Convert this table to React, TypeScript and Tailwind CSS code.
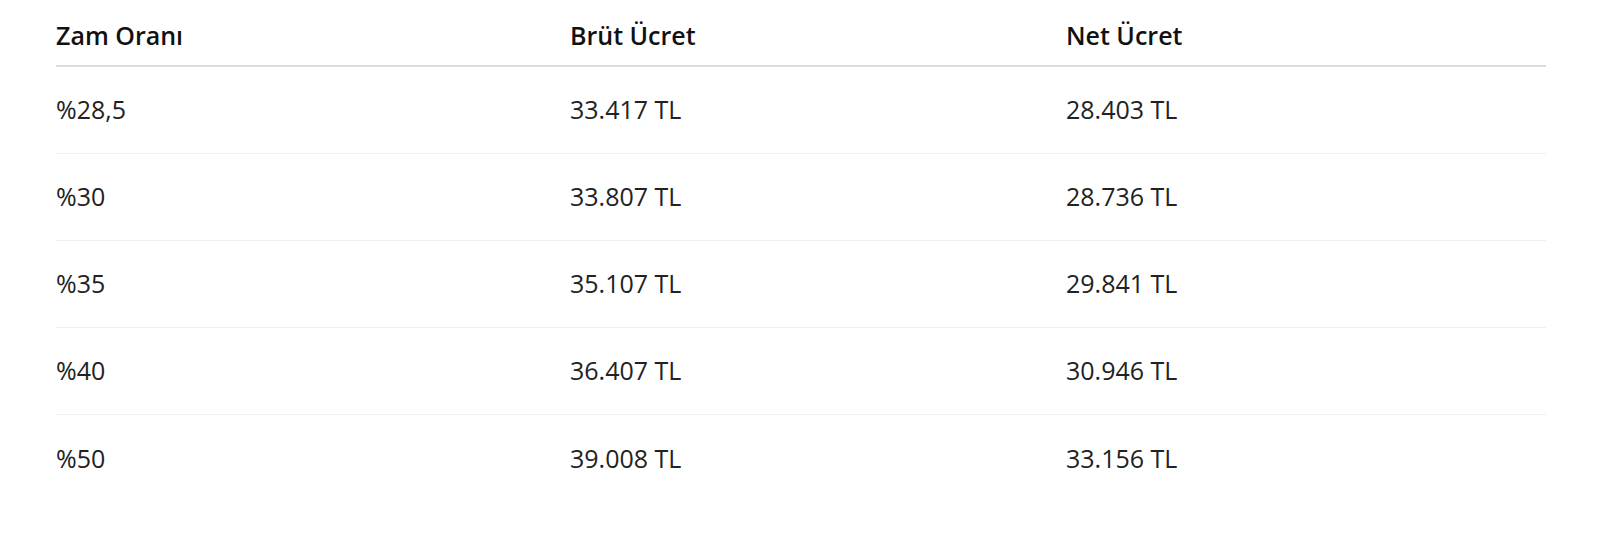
const rows = [
  { rate: "%28,5", gross: "33.417 TL", net: "28.403 TL" },
  { rate: "%30", gross: "33.807 TL", net: "28.736 TL" },
  { rate: "%35", gross: "35.107 TL", net: "29.841 TL" },
  { rate: "%40", gross: "36.407 TL", net: "30.946 TL" },
  { rate: "%50", gross: "39.008 TL", net: "33.156 TL" },
];

export default function App() {
  return (
    <main
      className="w-[1606px] h-[555px] bg-white pl-[56px] pr-[60px] text-[#222]"
      style={{ fontFamily: '"Open Sans", "Noto Sans", sans-serif' }}
    >
      <div className="grid grid-cols-[514px_496px_1fr] h-[67px] items-center pt-[6px] border-b-2 border-[#dcdcdc] text-[25px] font-semibold text-[#111]">
        <div>Zam Oranı</div>
        <div>Brüt Ücret</div>
        <div>Net Ücret</div>
      </div>
      {rows.map((r, i) => (
        <div
          key={r.rate}
          className={`grid grid-cols-[514px_496px_1fr] h-[87px] items-center text-[25px] ${
            i < rows.length - 1 ? "border-b border-[#f0f0f0]" : ""
          }`}
        >
          <div>{r.rate}</div>
          <div>{r.gross}</div>
          <div>{r.net}</div>
        </div>
      ))}
    </main>
  );
}
